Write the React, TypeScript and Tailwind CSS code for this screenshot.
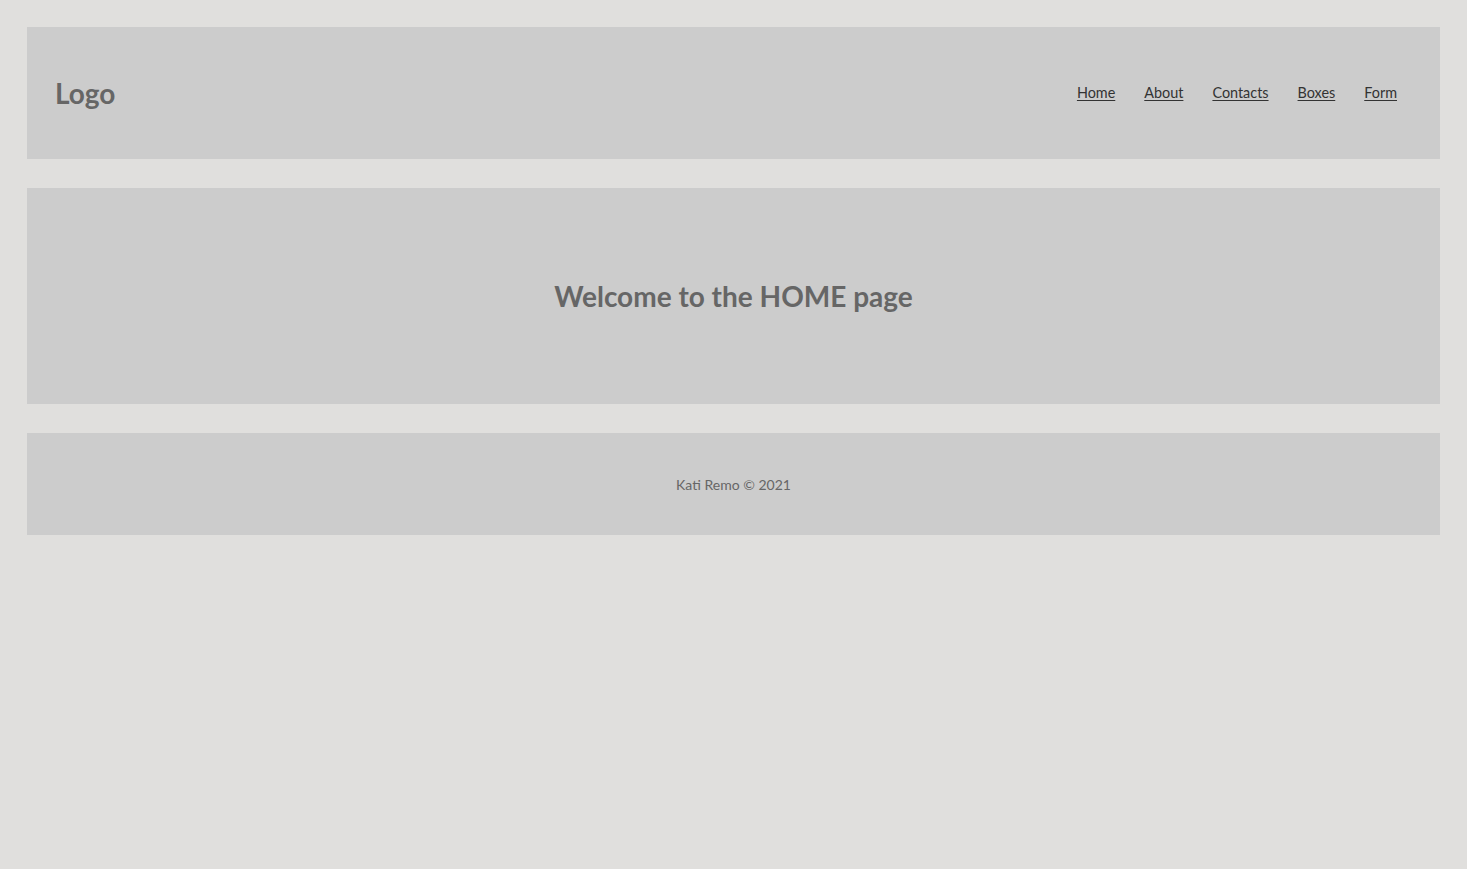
export default function App() {
  const links = ["Home", "About", "Contacts", "Boxes", "Form"]
  return (
    <div className="min-h-screen bg-[#e0dfdd] p-[27px] font-['Lato','Liberation_Sans',sans-serif]">
      <div className="flex flex-col gap-[29px]">
        <header className="flex h-[132px] items-center justify-between bg-[#cccccc] pl-[28px] pr-[43px]">
          <div className="text-[28px] font-bold text-[#666666]">Logo</div>
          <nav className="flex items-center gap-[29px] text-[14.4px] text-[#333333]">
            {links.map((l) => (
              <a key={l} href="#" className="underline underline-offset-2">
                {l}
              </a>
            ))}
          </nav>
        </header>

        <main className="flex h-[216px] items-center justify-center bg-[#cccccc]">
          <h1 className="text-[28px] font-bold text-[#666666]">Welcome to the HOME page</h1>
        </main>

        <footer className="flex h-[102px] items-center justify-center bg-[#cccccc] text-[14px] text-[#666666]">
          Kati Remo © 2021
        </footer>
      </div>
    </div>
  )
}
